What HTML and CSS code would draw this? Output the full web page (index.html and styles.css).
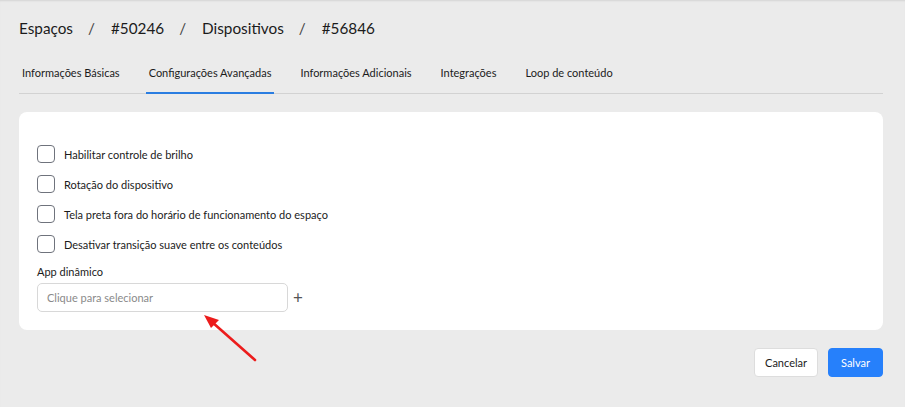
FILE: index.html
```html
<!DOCTYPE html>
<html lang="pt-BR">
<head>
	<meta charset="UTF-8">
	<meta name="viewport" content="width=device-width, initial-scale=1.0">
	<title>Dispositivo #56846</title>
	<link rel="stylesheet" href="styles.css">
</head>
<body>
	<main class="page">
		<nav class="crumbs">
			<span>Espaços</span><span class="sep">/</span>
			<span>#50246</span><span class="sep">/</span>
			<span>Dispositivos</span><span class="sep">/</span>
			<span>#56846</span>
		</nav>
		<ul class="tabs">
			<li>Informações Básicas</li>
			<li class="active">Configurações Avançadas</li>
			<li>Informações Adicionais</li>
			<li>Integrações</li>
			<li>Loop de conteúdo</li>
		</ul>
		<section class="card">
			<label class="check"><span class="box"></span>Habilitar controle de brilho</label>
			<label class="check"><span class="box"></span>Rotação do dispositivo</label>
			<label class="check"><span class="box"></span>Tela preta fora do horário de funcionamento do espaço</label>
			<label class="check"><span class="box"></span>Desativar transição suave entre os conteúdos</label>
			<div class="field">
				<p class="field-label">App dinâmico</p>
				<div class="field-row">
					<div class="select">Clique para selecionar</div>
					<span class="plus">+</span>
				</div>
			</div>
		</section>
		<div class="actions">
			<button class="btn">Cancelar</button>
			<button class="btn primary">Salvar</button>
		</div>
	</main>
	<svg class="arrow" width="905" height="407" viewBox="0 0 905 407">
		<line x1="255" y1="360" x2="212" y2="322" stroke="#ec1c1c" stroke-width="2.6" stroke-linecap="round"/>
		<polygon points="204,315 219,320 211,328" fill="#ec1c1c"/>
	</svg>
</body>
</html>
```
FILE: styles.css
```css
*{ box-sizing: border-box; }
body,ul,li,p,h1{
	margin: 0; padding: 0;
}
body{
	background: #ebebeb;
	font-family: Lato, "Noto Sans", sans-serif;
	color: #1b1b1b;
	box-shadow: inset 0 2px 2px -1px #d4d4d4;
	min-height: 407px;
	position: relative;
}
.page{ padding: 0 22px 0 19px; }
.crumbs{
	padding-top: 16px;
	font-size: 15.3px; line-height: 24px;
	display: flex;
}
.crumbs .sep{ margin: 0 16px 0 15px; color: #444; }
.tabs{
	list-style: none;
	display: flex; gap: 23px;
	margin-top: 23px;
	border-bottom: 1px solid #d2d2d2;
	font-size: 11px; line-height: 20px;
}
.tabs li{
	padding: 0 3px 9px;
	margin-bottom: -1px;
	border-bottom: 2px solid transparent;
}
.tabs li.active{ border-bottom-color: #2a7de1; }
.card{
	margin-top: 18px;
	background: #fff;
	border-radius: 8px;
	padding: 27px 18px 18px;
	font-size: 11px;
}
.check{
	display: flex; align-items: center;
	height: 30px;
}
.box{
	width: 18px; height: 18px;
	border: 1.5px solid #6f737c;
	border-radius: 4px;
	margin-right: 9px;
}
.field-label{ line-height: 18px; margin-top: 4px; }
.field-row{
	display: flex; align-items: center;
	margin-top: 2px;
}
.select{
	width: 251px; height: 29px;
	border: 1px solid #d8d8d8;
	border-radius: 5px;
	padding: 0 9px;
	line-height: 27px;
	color: #8a8a8a;
}
.plus{
	margin-left: 5px;
	font-size: 17px;
	color: #555;
}
.actions{
	display: flex; justify-content: flex-end; gap: 10px;
	margin-top: 18px;
}
.btn{
	height: 29px;
	padding: 0 10px;
	border: 1px solid #ddd;
	border-radius: 4px;
	background: #fff;
	font-family: inherit; font-size: 11px;
	color: #1b1b1b;
}
.btn.primary{
	background: #2680fb;
	border-color: #2680fb;
	color: #fff;
	padding: 0 12px;
}
.arrow{ position: absolute; left: 0; top: 0; pointer-events: none; }
```
